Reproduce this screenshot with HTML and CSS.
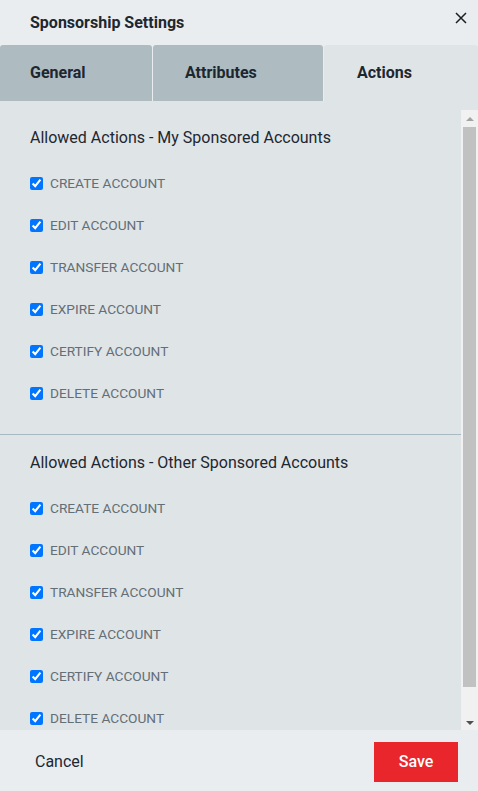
FILE: index.html
```html
<!DOCTYPE html>
<html lang="en">
<head>
<meta charset="utf-8">
<title>Sponsorship Settings</title>
<link rel="stylesheet" href="styles.css">
</head>
<body>
<div class="dialog">
  <header class="dlg-header">
    <h1 class="dlg-title">Sponsorship Settings</h1>
    <button class="close-btn" aria-label="Close">
      <svg width="12" height="12" viewBox="0 0 12 12"><path d="M1 1 L11 11 M11 1 L1 11" stroke="#1b1f24" stroke-width="1.5" fill="none"/></svg>
    </button>
  </header>
  <nav class="tabs">
    <div class="tab tab-general">General</div>
    <div class="tab tab-attributes">Attributes</div>
    <div class="tab tab-actions active">Actions</div>
  </nav>
  <div class="content">
    <div class="scroll">
      <section class="group">
        <h2 class="group-title">Allowed Actions - My Sponsored Accounts</h2>
        <ul class="opts">
          <li><label><input type="checkbox" checked><span>CREATE ACCOUNT</span></label></li>
          <li><label><input type="checkbox" checked><span>EDIT ACCOUNT</span></label></li>
          <li><label><input type="checkbox" checked><span>TRANSFER ACCOUNT</span></label></li>
          <li><label><input type="checkbox" checked><span>EXPIRE ACCOUNT</span></label></li>
          <li><label><input type="checkbox" checked><span>CERTIFY ACCOUNT</span></label></li>
          <li><label><input type="checkbox" checked><span>DELETE ACCOUNT</span></label></li>
        </ul>
      </section>
      <section class="group">
        <h2 class="group-title">Allowed Actions - Other Sponsored Accounts</h2>
        <ul class="opts">
          <li><label><input type="checkbox" checked><span>CREATE ACCOUNT</span></label></li>
          <li><label><input type="checkbox" checked><span>EDIT ACCOUNT</span></label></li>
          <li><label><input type="checkbox" checked><span>TRANSFER ACCOUNT</span></label></li>
          <li><label><input type="checkbox" checked><span>EXPIRE ACCOUNT</span></label></li>
          <li><label><input type="checkbox" checked><span>CERTIFY ACCOUNT</span></label></li>
          <li><label><input type="checkbox" checked><span>DELETE ACCOUNT</span></label></li>
        </ul>
      </section>
    </div>
    <div class="vscroll" aria-hidden="true">
      <div class="vs-btn"><span class="arrow-up"></span></div>
      <div class="vs-track"><div class="vs-thumb"></div></div>
      <div class="vs-btn"><span class="arrow-down"></span></div>
    </div>
  </div>
  <footer class="dlg-footer">
    <button class="btn-cancel">Cancel</button>
    <button class="btn-save">Save</button>
  </footer>
</div>
</body>
</html>
```
FILE: styles.css
```css
html, body {
  margin: 0;
  padding: 0;
}
body {
  font-family: Roboto, "Liberation Sans", sans-serif;
  background: #e9edf0;
  color: #1d2730;
}
.dialog {
  width: 478px;
  height: 791px;
  display: flex;
  flex-direction: column;
  background: #e9edf0;
}
.dlg-header {
  height: 45px;
  flex: none;
  display: flex;
  align-items: center;
  justify-content: space-between;
  padding: 0 11px 0 30px;
  box-sizing: border-box;
}
.dlg-title {
  margin: 0;
  font-size: 16px;
  font-weight: 700;
  color: #1d2730;
}
.close-btn {
  border: 0;
  background: transparent;
  padding: 0;
  width: 12px;
  height: 12px;
  display: flex;
  margin-bottom: 10px;
  cursor: pointer;
}
.tabs {
  height: 56px;
  flex: none;
  display: flex;
}
.tab {
  box-sizing: border-box;
  display: flex;
  align-items: center;
  font-size: 16px;
  font-weight: 700;
  color: #1d2730;
  background: #aebbc1;
  border-radius: 3px 3px 0 0;
  padding-bottom: 1px;
}
.tab-general {
  width: 152px;
  padding-left: 30px;
}
.tab-attributes {
  width: 170px;
  margin-left: 1px;
  padding-left: 32px;
}
.tab-actions {
  flex: 1;
  padding-left: 33px;
  margin-left: 1px;
}
.tab.active {
  background: #dfe4e7;
}
.content {
  flex: 1;
  min-height: 0;
  display: flex;
  background: #dfe4e7;
  padding-top: 9px;
}
.scroll {
  flex: 1;
  min-width: 0;
  overflow: hidden;
}
.vscroll {
  width: 17px;
  flex: none;
  display: flex;
  flex-direction: column;
  background: #f1f1f1;
}
.vs-btn {
  height: 17px;
  flex: none;
  display: flex;
  align-items: center;
  justify-content: center;
}
.arrow-up {
  width: 0;
  height: 0;
  border-left: 4px solid transparent;
  border-right: 4px solid transparent;
  border-bottom: 4px solid #a3a3a3;
}
.arrow-down {
  width: 0;
  height: 0;
  border-left: 4px solid transparent;
  border-right: 4px solid transparent;
  border-top: 4px solid #505050;
  margin-top: 2px;
}
.vs-track {
  flex: 1;
  padding: 0 2px;
}
.vs-thumb {
  height: 560px;
  background: #c1c1c1;
}
.group {
  padding: 17px 30px 20px;
}
.group + .group {
  border-top: 1px solid #a9b9c2;
}
.group-title {
  margin: 0;
  font-size: 16px;
  line-height: 22px;
  font-weight: 400;
  color: #1d2730;
}
.opts {
  list-style: none;
  margin: 13px 0 0;
  padding: 0;
}
.opts li {
  height: 42px;
  display: flex;
  align-items: center;
}
.opts label {
  display: flex;
  align-items: center;
  gap: 7px;
  font-size: 13.7px;
  color: #646e76;
}
.opts input {
  margin: 0;
  width: 13px;
  height: 13px;
  accent-color: #0075ff;
}
.dlg-footer {
  height: 61px;
  flex: none;
  display: flex;
  align-items: center;
  justify-content: space-between;
  padding: 2px 20px 0 35px;
  box-sizing: border-box;
}
.btn-cancel {
  border: 0;
  background: transparent;
  padding: 0;
  font-family: inherit;
  font-size: 16px;
  color: #1d2730;
  cursor: pointer;
}
.btn-save {
  width: 84px;
  height: 40px;
  border: 0;
  background: #e8262b;
  color: #ffffff;
  font-family: inherit;
  font-size: 16px;
  font-weight: 500;
  cursor: pointer;
}
```
